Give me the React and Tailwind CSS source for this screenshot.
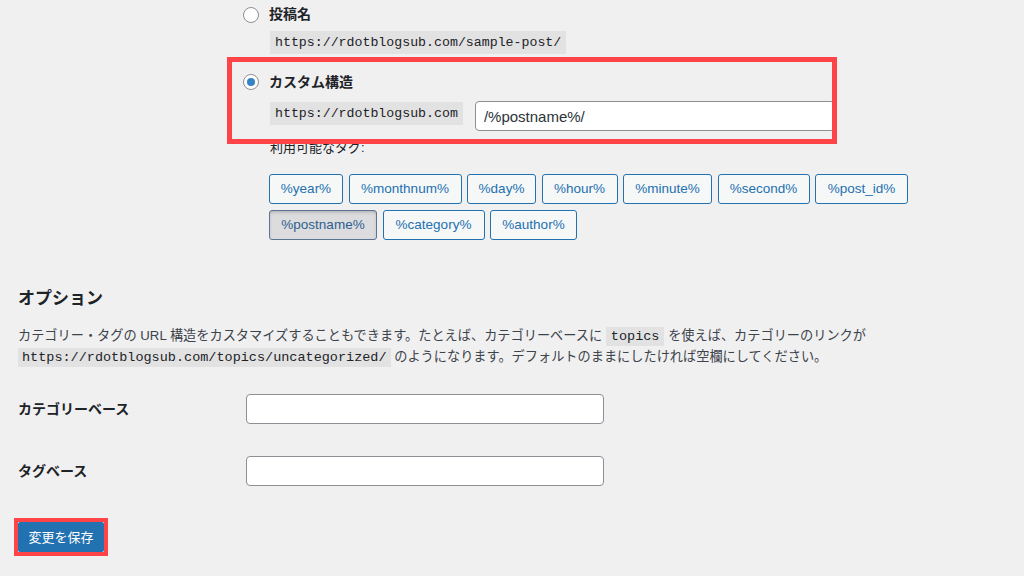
const tagsRow1 = [
    { label: '%year%', w: 'w-[74px]' },
    { label: '%monthnum%', w: 'w-[113px]' },
    { label: '%day%', w: 'w-[69px]' },
    { label: '%hour%', w: 'w-[76px]' },
    { label: '%minute%', w: 'w-[89px]' },
    { label: '%second%', w: 'w-[92px]' },
    { label: '%post_id%', w: 'w-[93px]' },
];

const tagsRow2 = [
    { label: '%postname%', w: 'w-[108px]', active: true },
    { label: '%category%', w: 'w-[102px]' },
    { label: '%author%', w: 'w-[87px]' },
];

const Radio = ({ checked }) => (
    <span className="w-4 h-4 rounded-full border border-[#8c8f94] bg-white flex items-center justify-center shrink-0">
        {checked && <span className="w-2 h-2 rounded-full bg-[#3582c4]" />}
    </span>
);

const TagButton = ({ tag }) => (
    <button
        className={`${tag.w} h-[30px] rounded-[3px] border text-[13.5px] flex items-center justify-center ${
            tag.active
                ? 'bg-[#dcdcde] border-[#5b7394] text-[#2c5f8f] shadow-[inset_0_2px_5px_-3px_rgba(0,0,0,0.5)]'
                : 'bg-[#f6f7f7] border-[#2271b1] text-[#2271b1]'
        }`}>
        {tag.label}
    </button>
);

const App = () => {
    return (
        <div className="relative w-[1024px] h-[576px] overflow-hidden bg-[#f0f0f1] text-[#1d2327] font-['Liberation_Sans','Noto_Sans_CJK_JP',sans-serif]">

            {/* permalink choices */}
            <div className="pl-[243px]">
                <div className="h-[29px] flex items-center gap-[10px]">
                    <Radio />
                    <span className="text-[14px] font-semibold">投稿名</span>
                </div>
                <div className="ml-[27px] mt-[1px] h-[23px] inline-flex items-center px-[5px] bg-[#e2e2e3] font-['Liberation_Mono',monospace] text-[13.25px]">
                    https://rdotblogsub.com/sample-post/
                </div>

                <div className="mt-[15px] h-[26px] flex items-center gap-[10px]">
                    <Radio checked />
                    <span className="text-[14px] font-semibold">カスタム構造</span>
                </div>
                <div className="ml-[27px] mt-[6px] flex items-start">
                    <div className="mt-[1px] h-[23px] flex items-center px-[5px] bg-[#e2e2e3] font-['Liberation_Mono',monospace] text-[13.25px]">
                        https://rdotblogsub.com
                    </div>
                    <input
                        type="text"
                        defaultValue="/%postname%/"
                        className="ml-[12px] w-[360px] h-[30px] bg-white border border-[#8c8f94] rounded-[4px] px-[8px] text-[15px] text-[#2c3338] focus:outline-none"
                    />
                </div>

                <p className="ml-[27px] mt-[8px] leading-[18px] text-[13px]">利用可能なタグ:</p>

                <div className="ml-[26px] mt-[17px] flex flex-col gap-[6px]">
                    <div className="flex gap-[5.5px]">
                        {tagsRow1.map((t) => (
                            <TagButton key={t.label} tag={t} />
                        ))}
                    </div>
                    <div className="flex gap-[5.5px]">
                        {tagsRow2.map((t) => (
                            <TagButton key={t.label} tag={t} />
                        ))}
                    </div>
                </div>
            </div>

            {/* options */}
            <div className="pl-[18px]">
                <h2 className="mt-[47px] leading-[24px] text-[17px] font-semibold">オプション</h2>
                <p className="mt-[15px] text-[13.2px] leading-[20px] text-[#3c434a]">
                    カテゴリー・タグの URL 構造をカスタマイズすることもできます。たとえば、カテゴリーベースに{' '}
                    <code className="bg-[#e2e2e3] px-[5px] py-[2px] font-['Liberation_Mono',monospace] text-[13.5px] text-[#1d2327]">topics</code>{' '}
                    を使えば、カテゴリーのリンクが
                    <br />
                    <code className="bg-[#e2e2e3] px-[4px] py-[2px] font-['Liberation_Mono',monospace] text-[13.5px] text-[#1d2327]">https://rdotblogsub.com/topics/uncategorized/</code>{' '}
                    のようになります。デフォルトのままにしたければ空欄にしてください。
                </p>

                <div className="mt-[26px] flex items-center h-[30px]">
                    <label className="w-[228px] text-[14px] font-semibold">カテゴリーベース</label>
                    <input type="text" className="w-[358px] h-[30px] bg-white border border-[#8c8f94] rounded-[4px] focus:outline-none" />
                </div>
                <div className="mt-[32px] flex items-center h-[30px]">
                    <label className="w-[228px] text-[14px] font-semibold">タグベース</label>
                    <input type="text" className="w-[358px] h-[30px] bg-white border border-[#8c8f94] rounded-[4px] focus:outline-none" />
                </div>

                <div className="mt-[32px] -ml-[4px] inline-block border-4 border-[#ff4448]">
                    <button className="w-[86px] h-[30px] bg-[#2271b1] text-white text-[13px] rounded-[2px] flex items-center justify-center">
                        変更を保存
                    </button>
                </div>
            </div>

            {/* highlight around custom structure */}
            <div className="absolute left-[227px] top-[57px] w-[610px] h-[87px] border-[5px] border-[#ff4448] pointer-events-none" />
        </div>
    );
};

export default App;
